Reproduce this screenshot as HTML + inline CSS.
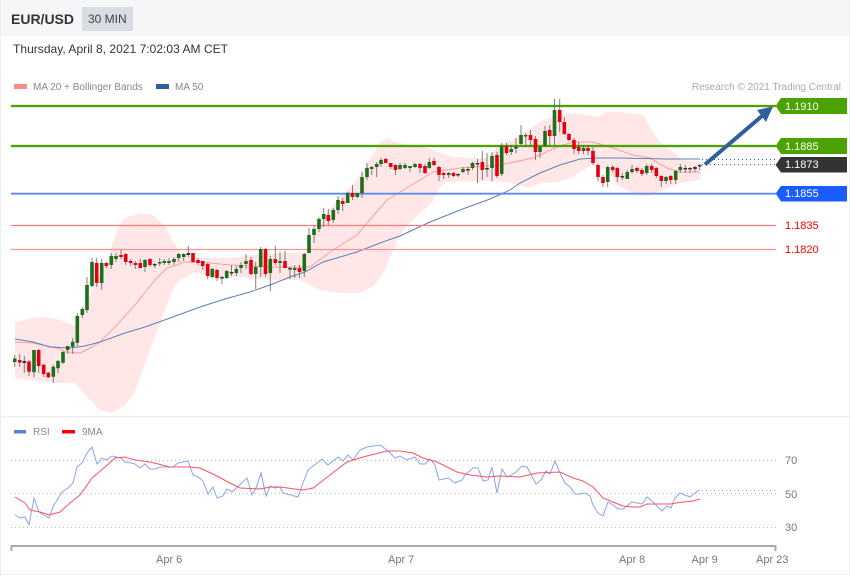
<!DOCTYPE html>
<html><head><meta charset="utf-8"><style>
html,body{margin:0;padding:0;background:#fff}
body{position:relative;width:850px;height:576px;overflow:hidden;font-family:"Liberation Sans",Arial,sans-serif}
svg{display:block;position:absolute;left:0;top:0}
.t{position:absolute;white-space:nowrap;line-height:14px;font-size:11px;color:#777;transform:translateZ(0)}
.w{color:#fff}.r{color:#f00}.l{font-size:10px;color:#888}
</style></head><body>
<svg width="850" height="576" viewBox="0 0 850 576" xmlns="http://www.w3.org/2000/svg">
<rect width="850" height="576" fill="#fff"/>
<rect x="0" y="0" width="850" height="36" fill="#f5f6f7"/>
<rect x="82" y="7" width="51" height="24" rx="1" fill="#d9dce3"/>
<rect x="14" y="84" width="13" height="5" fill="#ff8a8a"/>
<rect x="156" y="84" width="13" height="5" fill="#2f5f9f"/>

<path fill="#ffe7e7" d="M15 322L33 318L45 317L57 319L67 323L75 326L85 305L97 280L108 258L117 230L125 218L140 213L152 215L165 226L175 245L181 253L200 258L230 258L260 254L290 253L305 252L310 253L313 230L333 205L343 193L353 185L363 170L373 155L380 142L387 138L395 142L420 147L428 148L438 152L452 157L477 158L488 158L500 145L513 140L533 127L543 120L567 113L587 115L597 117L607 112L620 112L643 115L650 127L660 142L683 160L700 162L700 180L680 183L663 190L645 197L633 193L617 185L608 170L592 165L572 177L558 182L542 183L528 188L508 182L480 181L445 182L438 190L432 203L420 213L405 228L395 245L385 270L375 285L360 293L340 293L320 290L305 283L300 280L270 280L240 277L210 277L195 272L180 280L175 285L165 310L150 350L135 392L125 405L112 413L100 410L85 395L75 383L53 383L15 378Z"/>

<path fill="none" stroke="#ff9d9d" stroke-width="1" d="M15 342L33 343L57 348L67 352L80 353L90 348L100 342L115 327L135 305L155 280L167 268L177 265L183 262L200 262L230 265L270 267L310 267L333 250L357 235L367 223L387 200L400 192L420 180L433 172L460 168L500 165L533 158L557 147L573 142L593 142L613 148L633 155L650 158L667 168L680 172L700 172"/>
<path fill="none" stroke="#5f7fb5" stroke-width="1" d="M15 339L33 342L50 347L70 348L85 346L100 342L125 333L145 327L170 318L200 307L225 299L250 292L270 285L290 277L305 272L323 262L357 252L380 243L400 236L430 222L460 210L490 199L510 190L520 183L540 173L560 165L580 159L597 158L620 158L667 159L700 159"/>

<path stroke="#4ba300" stroke-opacity=".3" stroke-width="3" d="M11 106H776M11 146H776"/>
<path stroke="#4ba300" stroke-width="2" d="M11 106H776M11 146H776"/>
<path stroke="#5b8aee" stroke-width="1.800" d="M11 193.700H776"/>
<path stroke="#ff7a7a" stroke-width="1.200" d="M11 225.500H776"/>
<path stroke="#ff9292" stroke-width="1.200" d="M11 249.500H776"/>
<path stroke="#3f5f9f" stroke-width="1" stroke-dasharray="1 3" d="M702 159.500H775"/>
<path stroke="#555" stroke-width="1" stroke-dasharray="1 3" d="M702 164.500H775"/>

<path fill="none" stroke="#555" stroke-opacity=".75" stroke-width="1" d="M14.700 355V367M19.700 354V367M24.300 356V373M29 360V376M34 350V377M38.700 349V373M43.700 364V377M48.300 372V378M53.300 365V383M58 360V373M63 351V364M67.700 346V354M72.700 338V354M77.300 313V346M82.300 307V318M87 277V313M92 258V287M96.700 258V287M101.700 259V290M106.300 262V268M111.300 253V269M116 253V262M121 250V259M125.700 253V265M130.700 259V266M135.300 261V269M140.300 259V268M145 259V272M150 258V267M154.700 263V268M159.700 258V266M164.300 259V265M169 258V265M174 257V265M178.700 253V262M183.700 253V261M188.300 246V257M193 253V263M198 258V265M202.700 261V270M207.700 263V279M212.300 268V278M217 269V281M222 276V284M226.700 270V279M231.500 265V276M236.300 266V276M241 262V273M246 254V269M251 257V275M255.700 262V289M260.700 247V277M265.500 248V277M270.300 256V291M275.300 246V265M280 252V273M285 251V268M290 267V279M294.700 265V278M299.500 265V278M304.300 253V277M309 228V253M314 226V243M319 217V232M323.700 208V227M328.300 209V225M333.300 208V223M338 196V214M342.700 198V211M347.700 192V203M352.500 185V200M357.300 193V198M362 172V198M367 163V180M371.700 166V175M376.700 162V177M381 158V167M385.700 158V163M390.700 163V169M395.500 164V175M400 163V170M405 163V169M410 166V172M415 163V168M420 163V173M425 164V174M429.300 158V169M434 158V166M439 166V181M443.700 172V179M448.700 172V178M453.500 172V177M458 173V177M463 167V173M468 167V175M472.500 162V170M477.500 159V183M482.300 151V180M487 153V177M492 152V181M497 152V178M501.700 143V176M506.500 143V155M511.300 145V155M516 138V153M521 125V145M525.700 133V147M530.500 130V146M535.500 136V160M540 146V158M545 126V147M549.700 125V145M554.500 99V145M559.700 99V132M564.300 117V135M569 133V141M574 138V154M578.700 142V154M583.500 145V154M588 145V155M593 147V165M598 164V181M603 175V187M607.700 166V187M612.700 165V172M617.300 167V182M622.300 173V180M627.300 170V179M632 165V174M637 167V173M642 168V176M646.700 164V175M651.700 164V173M656.300 167V178M661.300 175V187M666 176V184M670.700 175V184M675.700 170V184M680.300 164V173M685.300 165V173M690 167V173M695 166V172M699.700 164V170"/>
<path fill="none" stroke="#1c6f1c" stroke-width="3.600" d="M14.700 358.500V362M34 350V372.300M53.300 366.700V376.700M58 361V368.300M63 352V362.700M67.700 346V350M72.700 341.700V346.700M77.300 316V342.700M82.300 309V315M87 285V310M92 262V286M101.700 263V283M111.300 256V265M116 256V259M145 260V267M159.700 262V263.500M164.300 261V263M169 261V263M174 259V262M178.700 254V258M183.700 254V257M212.300 269V277M226.700 271V278M236.300 269V273M241 265V268M246 261V264M255.700 267V274M260.700 249V267M270.300 259V273M280 261V263M294.700 268V270M304.300 254V271M309 235V253M314 229V235M319 219V229M323.700 214V219M333.300 210V220M338 200V210M347.700 193V203M357.300 193V197M362 177V193M367 168V177M371.700 167V169M376.700 164V167M381 160V164M400 165V169M405 165V168M410 166V168M415 164V167M429.300 162V168M448.700 173V175M463 169V172M472.500 163V168M492 156V168M501.700 146V174M511.300 149V152M521 135V144M525.700 135V136.500M540 147V152M545 131V146M554.500 110V136M583.500 148V151M607.700 167V182M627.300 172V179M632 169V172M646.700 166V173M666 177V181M675.700 171V180M680.300 167V170"/>
<path fill="none" stroke="#e6000e" stroke-width="3.600" d="M19.700 360V362.500M29 361.500V371.700M38.700 350V366M43.700 364.700V374M48.300 372.700V377.300M96.700 263V283M106.300 263V266M121 255V257M125.700 254V262M130.700 261V263M135.300 263V265M140.300 263V268M150 259V265M193 253V262M198 260V263M202.700 261V266M207.700 264V276M217 270V278M251 260V274M265.500 249V274M275.300 259V263M285 261V268M299.500 268V272M328.300 215V221M342.700 201V204M352.500 193V197M385.700 159V163M390.700 163V167M395.500 165V170M420 164V168M425 166V173M434 161V165M439 167V175M443.700 173V175M453.500 173V176M482.300 162V170M497 155V176M506.500 146V153M530.500 135V140M535.500 139V152M549.700 130V136M559.700 110V122M564.300 122V134M569 134V140M574 140V149M578.700 147V151M588 148V151M593 151V163M598 165V177M603 177V183M612.700 167V170M617.300 168V177M637 168V171M642 170V174M651.700 166V170M656.300 168V176M661.300 176V181M670.700 176V180"/>
<path fill="none" stroke="#333" stroke-width="3.600" d="M24.300 361V363M154.700 264V265.500M188.300 253V255M222 277V278.500M231.500 272V273.500M290 268V269.500M458 174V175.500M468 169V170.500M477.500 163V164.500M487 168V169.500M516 147V148.500M622.300 176V177.500M685.300 168V169.500M690 168V169.500M695 167V169M699.700 165V166.500"/>

<path fill="none" stroke="#2f5f9f" stroke-width="4" d="M705 164.500L762 116"/>
<path fill="#2f5f9f" d="M773 106.500L757 110L766 122Z"/>

<path fill="#4ba300" d="M775.700 106L781 98H847V114H781Z"/>
<path fill="#4ba300" d="M775.700 146L781 138H847V154H781Z"/>
<path fill="#333" d="M775.700 165L781 157H847V172.500H781Z"/>
<path fill="#1a5cff" d="M775.700 193.500L781 186H847V201.500H781Z"/>

<rect x="0" y="416" width="850" height="1.500" fill="#eceef1"/>
<rect x="14" y="430" width="12" height="3.500" fill="#5b7fe0"/>
<rect x="62" y="430" width="13" height="3.500" fill="#f00"/>

<path stroke="#bbb" stroke-width="1" stroke-dasharray="1 3" d="M11 460.500H776M11 493.500H776M11 527.500H776"/>
<path stroke="#7f9cee" stroke-width="1" stroke-dasharray="1 3" d="M702 490.500H775"/>
<path fill="none" stroke="#8aa4ec" stroke-width="1" d="M15 515L20 518L25 517L29 525L34 498L39 512L44 515L49 518L53 507L62 492L68 488L73 483L77 467L82 463L87 453L92 447L97 464L102 458L106 460L112 456L116 457L121 458L125 462L131 463L135 464L140 468L145 464L150 469L155 469L160 467L173 467L178 463L183 462L188 461L193 475L198 477L203 481L208 494L213 487L217 498L223 496L227 489L232 492L247 478L252 495L256 488L261 473L266 496L270 486L275 488L280 487L283 493L298 497L303 483L308 470L322 459L328 465L338 457L343 461L348 455L353 460L360 450L367 447L380 445L387 450L395 458L400 456L407 460L415 457L420 464L425 464L430 459L435 465L439 480L448 478L455 483L462 480L465 475L473 468L478 468L483 481L488 480L492 467L497 493L502 469L507 477L515 473L522 466L527 467L536 484L541 480L546 471L550 474L555 461L560 473L565 483L570 487L575 494L580 494L585 493L590 496L593 505L598 513L603 516L608 502L613 505L618 509L623 509L632 502L642 504L647 497L652 501L662 511L667 506L671 508L675 498L680 493L685 495L690 497L695 493L700 490"/>
<path fill="none" stroke="#ff5060" stroke-width="1" d="M15 497L25 503L30 510L40 512L49 515L60 512L70 503L80 495L92 478L105 467L115 458L125 457L135 460L150 462L170 467L190 467L200 468L215 475L230 483L240 488L260 489L270 487L280 487L295 489L303 490L313 488L330 475L347 462L363 457L387 451L400 451L413 453L423 458L437 462L457 472L470 475L487 477L500 476L520 477L537 473L560 472L573 478L583 481L593 487L603 498L613 502L623 506L633 507L640 507L647 504L670 504L683 502L693 501L700 499"/>

<path fill="none" stroke="#aaa" stroke-width="2" d="M11.500 551V546H775.500V551"/>
<path fill="none" stroke="#eceef1" stroke-width="1" d="M.5 0V574.500H849.500V0"/>
</svg>

<div class="t" style="left:11px;top:11px;font-size:14px;font-weight:bold;color:#333;line-height:16px">EUR/USD</div>
<div class="t" style="left:88px;top:12px;font-size:12px;color:#444">30 MIN</div>
<div class="t" style="left:13px;top:42px;font-size:12px;color:#333;letter-spacing:.03px">Thursday, April 8, 2021 7:02:03 AM CET</div>
<div class="t l" style="left:33px;top:81px">MA 20 + Bollinger Bands</div>
<div class="t l" style="left:175px;top:81px">MA 50</div>
<div class="t l" style="right:9px;top:81px;color:#aaa">Research © 2021 Trading Central</div>
<div class="t w" style="left:785px;top:100px">1.1910</div>
<div class="t w" style="left:785px;top:140px">1.1885</div>
<div class="t w" style="left:785px;top:158px">1.1873</div>
<div class="t w" style="left:785px;top:187px">1.1855</div>
<div class="t r" style="left:785px;top:219px">1.1835</div>
<div class="t r" style="left:785px;top:243px">1.1820</div>
<div class="t l" style="left:33px;top:426px">RSI</div>
<div class="t l" style="left:82px;top:426px">9MA</div>
<div class="t" style="left:785px;top:454px">70</div>
<div class="t" style="left:785px;top:488px">50</div>
<div class="t" style="left:785px;top:521px">30</div>
<div class="t" style="left:156px;top:553px">Apr 6</div>
<div class="t" style="left:388px;top:553px">Apr 7</div>
<div class="t" style="left:619px;top:553px">Apr 8</div>
<div class="t" style="left:691.500px;top:553px">Apr 9</div>
<div class="t" style="left:756px;top:553px">Apr 23</div>
</body></html>
